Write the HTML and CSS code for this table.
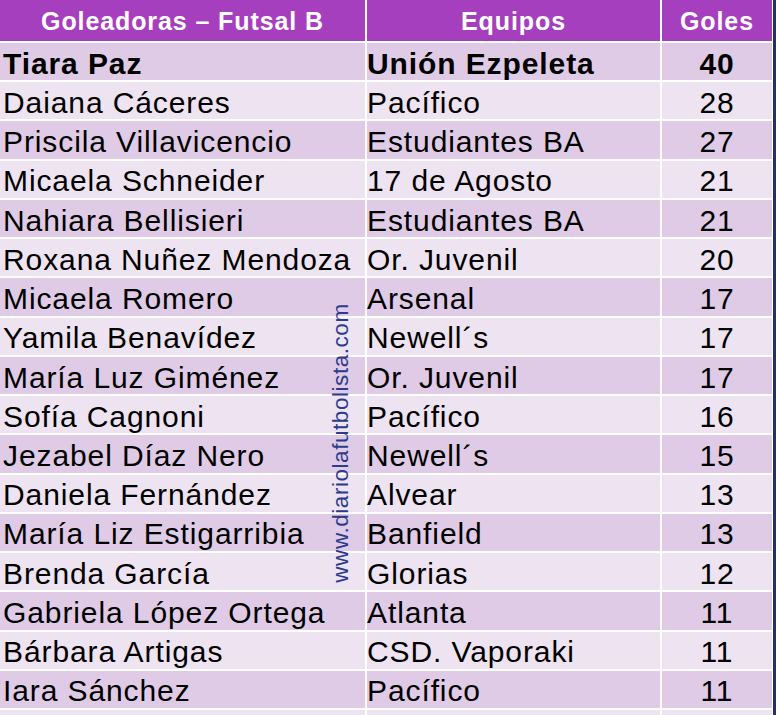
FILE: index.html
```html
<!DOCTYPE html>
<html lang="es">
<head>
<meta charset="utf-8">
<title>Goleadoras – Futsal B</title>
<link rel="stylesheet" href="styles.css">
</head>
<body>
<div class="frame">
  <div class="table">
    <div class="cell head">Goleadoras – Futsal B</div>
    <div class="cell head">Equipos</div>
    <div class="cell head">Goles</div>

    <div class="cell odd bold">Tiara Paz</div><div class="cell odd bold team">Unión Ezpeleta</div><div class="cell odd bold num">40</div>
    <div class="cell even">Daiana Cáceres</div><div class="cell even team">Pacífico</div><div class="cell even num">28</div>
    <div class="cell odd">Priscila Villavicencio</div><div class="cell odd team">Estudiantes BA</div><div class="cell odd num">27</div>
    <div class="cell even">Micaela Schneider</div><div class="cell even team">17 de Agosto</div><div class="cell even num">21</div>
    <div class="cell odd">Nahiara Bellisieri</div><div class="cell odd team">Estudiantes BA</div><div class="cell odd num">21</div>
    <div class="cell even">Roxana Nuñez Mendoza</div><div class="cell even team">Or. Juvenil</div><div class="cell even num">20</div>
    <div class="cell odd">Micaela Romero</div><div class="cell odd team">Arsenal</div><div class="cell odd num">17</div>
    <div class="cell even">Yamila Benavídez</div><div class="cell even team">Newell´s</div><div class="cell even num">17</div>
    <div class="cell odd">María Luz Giménez</div><div class="cell odd team">Or. Juvenil</div><div class="cell odd num">17</div>
    <div class="cell even">Sofía Cagnoni</div><div class="cell even team">Pacífico</div><div class="cell even num">16</div>
    <div class="cell odd">Jezabel Díaz Nero</div><div class="cell odd team">Newell´s</div><div class="cell odd num">15</div>
    <div class="cell even">Daniela Fernández</div><div class="cell even team">Alvear</div><div class="cell even num">13</div>
    <div class="cell odd">María Liz Estigarribia</div><div class="cell odd team">Banfield</div><div class="cell odd num">13</div>
    <div class="cell even">Brenda García</div><div class="cell even team">Glorias</div><div class="cell even num">12</div>
    <div class="cell odd">Gabriela López Ortega</div><div class="cell odd team">Atlanta</div><div class="cell odd num">11</div>
    <div class="cell even">Bárbara Artigas</div><div class="cell even team">CSD. Vaporaki</div><div class="cell even num">11</div>
    <div class="cell odd">Iara Sánchez</div><div class="cell odd team">Pacífico</div><div class="cell odd num">11</div>
    <div class="cell even tail"></div><div class="cell even tail"></div><div class="cell even tail"></div>
  </div>
  <div class="watermark">www.diariolafutbolista.com</div>
</div>
</body>
</html>
```

FILE: styles.css
```css
html, body {
  margin: 0;
  padding: 0;
}
body {
  background: #24306c;
  width: 776px;
  height: 715px;
  overflow: hidden;
  font-family: "Liberation Sans", Arial, sans-serif;
}
.frame {
  position: relative;
  width: 773px;
  height: 715px;
  background: #ffffff;
  overflow: hidden;
}
.table {
  display: grid;
  grid-template-columns: 365px 293px 110px;
  grid-template-rows: 41px repeat(17, 37.24px) 20px;
  column-gap: 2px;
  row-gap: 2px;
}
.cell {
  display: flex;
  align-items: center;
  padding-left: 3px;
  padding-top: 4px;
  font-size: 30px;
  letter-spacing: 0.9px;
  color: #000;
  white-space: nowrap;
  overflow: visible;
}
.team {
  padding-left: 0;
}
.head {
  background: #a63fbe;
  color: #ffffff;
  font-weight: bold;
  font-size: 25px;
  letter-spacing: 0.9px;
  justify-content: center;
  padding-left: 0;
  padding-top: 1px;
}
.odd {
  background: #dfcbe6;
}
.even {
  background: #eee3f1;
}
.bold {
  font-weight: bold;
}
.num {
  justify-content: center;
  padding-left: 0;
}
.watermark {
  position: absolute;
  left: 341px;
  top: 443px;
  transform: translate(-50%, -50%) rotate(-90deg);
  font-size: 22.5px;
  letter-spacing: 0.55px;
  color: #2c3b8c;
  white-space: nowrap;
}
```
